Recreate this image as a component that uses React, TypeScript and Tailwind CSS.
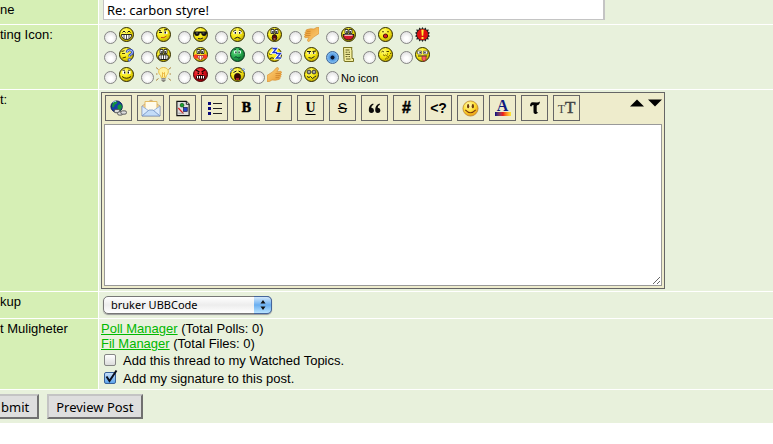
import { useState } from "react";
import type { ReactNode } from "react";

const lucida = "font-['Noto_Sans',sans-serif]";

function Face({ color = "yellow", children }: { color?: "yellow" | "green" | "red"; children: ReactNode }) {
  const edge = { yellow: "#2f2b00", green: "#06331a", red: "#3d0000" }[color];
  return (
    <svg viewBox="0 0 15 15" className="size-[15px]" aria-hidden="true">
      <circle cx="7.5" cy="7.5" r="7" fill={`url(#ball-${color})`} stroke={edge} strokeWidth="1" />
      {children}
    </svg>
  );
}

function Gradients() {
  return (
    <svg className="absolute size-0" aria-hidden="true">
      <defs>
        <radialGradient id="ball-yellow" cx="0.38" cy="0.3" r="0.8">
          <stop offset="0" stopColor="#fffb7a" />
          <stop offset="0.5" stopColor="#f6e810" />
          <stop offset="1" stopColor="#b09800" />
        </radialGradient>
        <radialGradient id="ball-green" cx="0.38" cy="0.3" r="0.75">
          <stop offset="0" stopColor="#6ddc8a" />
          <stop offset="0.5" stopColor="#2bb052" />
          <stop offset="1" stopColor="#0c6b30" />
        </radialGradient>
        <radialGradient id="ball-red" cx="0.38" cy="0.3" r="0.75">
          <stop offset="0" stopColor="#ff4a4a" />
          <stop offset="0.5" stopColor="#e0101c" />
          <stop offset="1" stopColor="#900008" />
        </radialGradient>
        <linearGradient id="hand" x1="0" y1="0" x2="1" y2="1">
          <stop offset="0" stopColor="#ffd27a" />
          <stop offset="1" stopColor="#e89a30" />
        </linearGradient>
      </defs>
    </svg>
  );
}

const wideEyes = (
  <>
    <path d="M4 2.500h3v4H4zM8 2.500h3v4H8z" fill="#fff" stroke="#111" strokeWidth="0.8" />
    <path d="M5.300 4h1.200v2H5.300zM8.600 4h1.200v2H8.600z" fill="#111" />
  </>
);

const handPath =
  "M0 8.500L3 6.500 5.500 5 9.500 0.800C10.800 0 12 1 11.300 2.500L10 4.800 13.300 4.300C14.800 4.300 14.900 6 13.700 6.500 14.700 6.900 14.500 8.300 13.400 8.600 14.200 9.100 13.900 10.400 12.800 10.600 13.300 11.300 12.900 12.300 12 12.400L8.500 13.300 5 13 2.500 14.500 0 14.500z";

type PostIcon = { name: string; art: ReactNode };

const iconRows: PostIcon[][] = [
  [
    { name: "Grin", art: <Face><path d="M3.500 5.500q1.500-3 3 0M8.500 5.500q1.500-3 3 0" stroke="#111" fill="none" /><path d="M2.500 7.500h10q0 5-5 5t-5-5z" fill="#fff" stroke="#111" strokeWidth="0.9" /><path d="M5 7.500v4.500M7.500 7.500v5M10 7.500v4.500" stroke="#222" strokeWidth="0.8" /></Face> },
    { name: "Wink", art: <Face><path d="M3 3.500l2 .5M3 5.500h3M8 3l3-.5" stroke="#111" fill="none" /><path d="M8 4.500h3.500V7H8z" fill="#fff" /><path d="M8.500 4.500H10V6.500H8.500z" fill="#111" /><path d="M5 10.500q3 1 5.500-1.500" stroke="#c04a20" fill="none" /></Face> },
    { name: "Cool", art: <Face><path d="M1 4.500h13v1.500q-.5 3-3 3T8.300 6.300H6.700Q6.500 9 4 9T1 6z" fill="#111" /><path d="M3 6h2M9.500 6h2" stroke="#888" strokeWidth="0.8" /><path d="M5 11.500q3 1 5-.5" stroke="#222" fill="none" /></Face> },
    { name: "Sad", art: <Face><path d="M3.500 4h3v3h-3zM8.500 4h3v3h-3z" fill="#fff" /><path d="M3 4.500L6 3M9 3l3 1.500" stroke="#111" strokeWidth="0.8" /><path d="M4.700 5H6v1.700H4.700zM9 5h1.300v1.700H9z" fill="#111" /><path d="M4.500 11.500q3-2.500 6 0" stroke="#111" fill="none" /></Face> },
    { name: "Shocked", art: <Face>{wideEyes}<ellipse cx="7.500" cy="10.500" rx="2.300" ry="2.900" fill="#5c0b0b" stroke="#111" strokeWidth="0.9" /><path d="M6.500 12h2" stroke="#e88" /></Face> },
    { name: "Thumbs down", art: <svg viewBox="0 0 15 15" className="size-[15px]" aria-hidden="true"><g transform="matrix(1 0 0 -1 0 15)"><path transform="matrix(-1 0 0 1 15 0)" d={handPath} fill="url(#hand)" stroke="#d58a2c" strokeWidth="0.6" /><path d="M1.500 6.500h5M2 8.600h4.500M3 10.600h3.500" stroke="#c97d25" strokeWidth="0.7" /></g></svg> },
    { name: "Laugh", art: <Face>{wideEyes}<path d="M2 7.500h11q-.5 5.500-5.500 5.500T2 7.500z" fill="#d4182a" stroke="#111" strokeWidth="0.9" /><path d="M3.500 8.200h8" stroke="#fff" /></Face> },
    { name: "Yawn", art: <Face><path d="M4 5q1-1 2 0M9 5q1-1 2 0" stroke="#5a4a00" fill="none" /><ellipse cx="7.500" cy="9" rx="2.200" ry="2" fill="#d32020" stroke="#3a0808" strokeWidth="0.9" /></Face> },
    { name: "Important", art: <svg viewBox="0 0 15 15" className="size-[15px]" aria-hidden="true"><path d="M7.500 0l1.300 2 2-1.500.5 2.300 2.500-.3-.8 2.300 2 1-1.500 1.700 1.500 1.700-2 1 .8 2.300-2.500-.3-.5 2.300-2-1.500-1.300 2-1.300-2-2 1.500-.5-2.300-2.500.3.800-2.300-2-1 1.500-1.700L0 5.800l2-1-.8-2.300 2.500.3.500-2.300 2 1.500z" fill="#222" /><circle cx="7.500" cy="7.500" r="5.500" fill="#e0100f" /><path d="M6.300 2.800h2.400L8.200 8.800H6.800zM6.500 10h2v2h-2z" fill="#ffef3a" /></svg> },
  ],
  [
    { name: "Question", art: <Face><path d="M2.500 4.500l3-.8M3 6.500h3M3.500 11l3.500-1" stroke="#4a4000" fill="none" /><path d="M8 5.500q0-2.500 2.700-2.500t2.800 2.300q0 1.700-2 2.300-1 .5-1 2" fill="none" stroke="#2b46ba" strokeWidth="2.600" /><path d="M8 5.500q0-2.500 2.700-2.500t2.800 2.300q0 1.700-2 2.300-1 .5-1 2" fill="none" stroke="#bfd0ff" strokeWidth="1" /><circle cx="10.500" cy="12.700" r="1.300" fill="#9bb4ff" stroke="#2b46ba" strokeWidth="0.8" /></Face> },
    { name: "Teeth", art: <Face>{wideEyes}<rect x="2.800" y="7.800" width="9.400" height="4.700" rx="1.500" fill="#fff" stroke="#111" /><path d="M5.200 7.800v4.700M7.500 7.800v4.700M9.800 7.800v4.700" stroke="#222" strokeWidth="0.8" /></Face> },
    { name: "Blush", art: <Face>{wideEyes}<circle cx="3" cy="9.500" r="2.300" fill="#ff3c24" /><circle cx="12" cy="9.500" r="2.300" fill="#ff3c24" /><path d="M4.500 8.500h6q-.5 4.500-3 4.500t-3-4.500z" fill="#fff" stroke="#a11" strokeWidth="0.8" /><path d="M6.500 8.500v4M8.500 8.500v4" stroke="#a44" strokeWidth="0.7" /></Face> },
    { name: "Sick", art: <Face color="green"><path d="M4 3.500h2.700v3H4zM8.300 3.500H11v3H8.300z" fill="#dfe" /><path d="M5.300 4.500h1.200v1.700H5.300zM8.500 4.500h1.200v1.700H8.500z" fill="#021" /><path d="M4 3l2-.8M9 2.200l2 .8M4.500 10.500q1.500-1.500 3 0t3-.5" stroke="#032" fill="none" strokeWidth="0.9" /></Face> },
    { name: "Sleepy", art: <Face><path d="M2 7h3M3 11.500q2-1.500 4 0" stroke="#222" fill="none" /><path d="M5.500 1.500h4L6 5.500h4M9 6.500h4.500l-4 4.500H14" stroke="#fff" strokeWidth="3" fill="none" /><path d="M5.500 1.500h4L6 5.500h4M9 6.500h4.500l-4 4.500H14" stroke="#1d3bd1" strokeWidth="1.300" fill="none" /></Face> },
    { name: "Smirk", art: <Face><path d="M3.500 5.500h3V7h-3zM8.500 5.500h3V7h-3z" fill="#fff" /><path d="M3 4.500h4M8.500 4.500L12 4" stroke="#111" /><path d="M4.700 5.200H6v1.600H4.700zM9 5.200h1.300v1.600H9z" fill="#111" /><path d="M4.500 10.500q3 2 6-1" stroke="#222" fill="none" /></Face> },
    { name: "Note", art: <svg viewBox="0 0 15 15" className="size-[15px]" aria-hidden="true"><path d="M2.500.5H11q-1 1.500 0 3v8h1.500v3H4q-1.300 0-1-2z" fill="#f4efa0" stroke="#77711d" strokeWidth="1" /><path d="M4.500 3h4M4.500 5.200h2M7.500 5.200H9M4.500 7.400H9M4.500 9.600h2M7.500 9.600H9M5 12h4.500" stroke="#4b4710" strokeWidth="0.9" /></svg> },
    { name: "Whistle", art: <Face><path d="M3.500 5q1-1.500 2.500 0M8.500 4.500H11" stroke="#4a3e00" fill="none" /><path d="M6 9q1.500-2 3 0t3-1M8 11q2 1 3-1" stroke="#8e7200" fill="none" /><path d="M5 8h1M9 7h1M12 6.500h1M7 12h1" stroke="#6e5800" /></Face> },
    { name: "Tongue", art: <Face><path d="M2.500 4h4v3h-4zM8.500 4h4v3h-4z" fill="#fff" stroke="#555" strokeWidth="0.7" /><path d="M4.500 4.800h1.300v1.400H4.500zM9.300 4.800h1.300v1.400H9.300z" fill="#111" /><path d="M3 9h9" stroke="#222" /><path d="M7 9.300h4V12q-.5 2-2 2t-2-2z" fill="#f55f68" stroke="#9e1e28" strokeWidth="0.7" /></Face> },
  ],
  [
    { name: "Smile", art: <Face><path d="M3.500 3.500h3v3.500h-3zM8.500 3.500h3v3.500h-3z" fill="#fff" /><path d="M3.500 3.300h2.500M9 3.300h2.500" stroke="#222" strokeWidth="0.8" /><path d="M5 4.500h1.300v2H5zM8.700 4.500H10v2H8.700z" fill="#111" /><path d="M3 9.500q4.500 3.500 9 0" stroke="#332b00" fill="none" /></Face> },
    { name: "Idea", art: <svg viewBox="0 0 15 15" className="size-[15px]" aria-hidden="true"><path d="M0 .5l2.500 2M15 .5l-2.500 2M0 7h1.500M15 7h-1.500M0 13.500l2.500-2M15 13.500l-2.500-2" stroke="#a8782c" strokeWidth="0.9" /><path d="M7.500.5c5.500 0 6 5.500 3 7.800L9.500 11h-4l-1-2.700C1.500 6 2 .5 7.500.5z" fill="#fff3a0" stroke="#e7b93d" strokeWidth="0.9" /><path d="M6.500 10V5.500l1 1 1-1V10" stroke="#e7a92c" fill="none" strokeWidth="0.8" /><path d="M5.500 11h4v2.500L8 15H7l-1.500-1.500z" fill="#85857d" /><path d="M5.500 12.300h4" stroke="#ddd" strokeWidth="0.6" /></svg> },
    { name: "Mad", art: <Face color="red"><path d="M3 3l3.500 2M12 3L8.500 5" stroke="#200" strokeWidth="1.300" /><path d="M4.500 5.500h1.500V7H4.500zM9 5.500h1.500V7H9z" fill="#200" /><rect x="3.500" y="8.500" width="8" height="3.500" rx="1" fill="#fff" stroke="#200" /><path d="M5.500 8.500V12M7.500 8.500V12M9.500 8.500V12" stroke="#200" strokeWidth="0.9" /></Face> },
    { name: "Cry", art: <Face><path d="M0 2.500q2-2 4 1M15 2.500q-2-2-4 1M0 5l2-1M15 5l-2-1" stroke="#6e94d8" fill="none" /><path d="M3.500 5.500l3-1.500M11.500 5.500l-3-1.500" stroke="#111" /><ellipse cx="7.500" cy="9.800" rx="3.200" ry="3.500" fill="#3a0505" stroke="#111" strokeWidth="0.6" /><path d="M6 12h3" stroke="#e23030" strokeWidth="1.400" /></Face> },
    { name: "Thumbs up", art: <svg viewBox="0 0 15 15" className="size-[15px]" aria-hidden="true"><path d={handPath} fill="url(#hand)" stroke="#d58a2c" strokeWidth="0.6" /><path d="M8.500 6.500h5M8.500 8.600H13M8.500 10.600H12" stroke="#c97d25" strokeWidth="0.7" /></svg> },
    { name: "Crazy", art: <Face><circle cx="5" cy="5" r="1.900" fill="#fff" stroke="#111" strokeWidth="0.9" /><circle cx="10" cy="5" r="1.900" fill="#fff" stroke="#111" strokeWidth="0.9" /><path d="M5 4.300v1.500M10 4.300v1.500" stroke="#111" /><path d="M3 9.500l2 1 1.500-1 2 2 2-1.500 1.500-1" stroke="#222" fill="none" /></Face> },
  ],
];

const radioClass =
  "size-[13px] shrink-0 appearance-none rounded-full border border-[#858585] bg-[radial-gradient(circle_at_50%_60%,#ffffff_20%,#d6d6d6_100%)] checked:border-[#38629a] checked:bg-[radial-gradient(circle,#0b1730_22%,#4b93df_30%,#b4e5ff_100%)]";

const checkboxClass =
  "peer size-3 appearance-none rounded-[2px] border border-[#858585] bg-linear-to-b from-white to-[#dcdcdc] checked:border-[#38629a] checked:from-[#c6e0fa] checked:to-[#5ba4ec]";

const tools: { name: string; art: ReactNode }[] = [
  { name: "Link", art: <svg viewBox="0 0 18 18" className="size-[17px]"><circle cx="7" cy="7" r="6" fill="#173ea8" stroke="#06134a" /><path d="M3 3q3-3 5-1l-1 2-2 1-1 3-2-1zM8 6l3-2 2 3-2 4-2 1-1-3z" fill="#17953b" /><path d="M3 2.500q2-1.500 3.500-1" stroke="#a9d9ff" fill="none" /><g fill="#ddd" stroke="#555"><rect x="4.500" y="10" width="6" height="3.500" rx="1.700" /><rect x="8" y="12.500" width="5.500" height="3.500" rx="1.700" /><rect x="11.500" y="11.500" width="6" height="3.500" rx="1.700" /></g></svg> },
  { name: "E-mail", art: <svg viewBox="0 0 20 18" className="h-[18px] w-5"><path d="M1 7l9-6 9 6v10H1z" fill="#f7d69a" stroke="#c4a887" /><path d="M4 2.500h12V11l-6 3-6-3z" fill="#fffbea" stroke="#e4bb62" /><path d="M1 7l7 5-7 5zM19 7l-7 5 7 5z" fill="#dcebfc" stroke="#88a6d2" strokeWidth="0.8" /><path d="M1 17l7-6h4l7 6z" fill="#c3dcf8" stroke="#7c9bcb" strokeWidth="0.9" /></svg> },
  { name: "Image", art: <svg viewBox="0 0 16 18" className="h-[17px] w-4"><path d="M1.500 1.500h10l3 3v12h-13z" fill="#ddd" stroke="#111" strokeWidth="1.200" /><path d="M11.500 1.500v3h3" fill="#fff" stroke="#111" /><circle cx="7" cy="5.500" r="2" fill="#16a02b" stroke="#064210" strokeWidth="0.6" /><rect x="8.500" y="8" width="4" height="4" fill="#2343cf" stroke="#0a123f" strokeWidth="0.7" /><path d="M3 8.500l5.500 6" stroke="#d22" strokeWidth="1.300" /><path d="M3 14h6" stroke="#999" /></svg> },
  { name: "List", art: <svg viewBox="0 0 16 15" className="h-[15px] w-4"><path d="M1 1h3v3H1zM1 6h3v3H1zM1 11h3v3H1z" fill="#080878" /><path d="M6 2.500h9M6 7.500h9M6 12.500h9" stroke="#222" strokeWidth="1" /></svg> },
  { name: "Bold", art: <span className="font-['Liberation_Serif',serif] text-[14px] font-bold [-webkit-text-stroke:0.5px_#000]">B</span> },
  { name: "Italic", art: <span className="font-['Liberation_Serif',serif] text-[14px] font-bold italic">I</span> },
  { name: "Underline", art: <span className="font-['Liberation_Serif',serif] text-[14px] font-bold underline underline-offset-2">U</span> },
  { name: "Strikethrough", art: <span className="font-['Liberation_Sans',sans-serif] text-[14px] line-through">S</span> },
  { name: "Quote", art: <svg viewBox="0 0 14 12" className="h-[11px] w-[13px]"><path d="M5.500.5Q.5 2 .8 8a2.800 2.800 0 1 0 2.700-2.800Q3.300 3 6 1.500zM12.500.5Q7.500 2 7.800 8a2.800 2.800 0 1 0 2.700-2.800Q10.300 3 13 1.500z" fill="#0a0a0a" /></svg> },
  { name: "Code", art: <span className="font-['Liberation_Sans',sans-serif] text-[16px] font-bold [-webkit-text-stroke:0.5px_#000]">#</span> },
  { name: "PHP", art: <span className="font-['Liberation_Sans',sans-serif] text-[14px] font-bold">&lt;?</span> },
  { name: "Smileys", art: <svg viewBox="0 0 18 18" className="size-[17px]"><defs><radialGradient id="smile" cx="0.4" cy="0.3" r="0.7"><stop offset="0" stopColor="#fffbc0" /><stop offset="0.550" stopColor="#ffe032" /><stop offset="1" stopColor="#eb9d13" /></radialGradient></defs><circle cx="9" cy="9" r="8" fill="url(#smile)" stroke="#b98232" strokeWidth="0.8" /><ellipse cx="6.500" cy="6.500" rx="1.200" ry="2.300" fill="#6e3d10" /><ellipse cx="11.500" cy="6.500" rx="1.200" ry="2.300" fill="#6e3d10" /><path d="M3.500 10.500q5.500 6 11 0" stroke="#7c3b10" strokeWidth="1.300" fill="none" /></svg> },
  { name: "Colour", art: <span className="flex flex-col items-center"><span className="font-['Liberation_Serif',serif] text-[16px] leading-3 font-bold text-[#101b80]">A</span><span className="h-1 w-4 bg-linear-to-r from-[#100080] via-[#ee1111] to-[#ffee33]" /></span> },
  { name: "Font", art: <svg viewBox="0 0 12 16" className="h-4 w-3"><path d="M1 6Q1.200 1.800 4 2.200l4 .3q1.500 0 3-1-.3 3.500-3 3.700l-.3 1v5.300q.3 1 1.500 1-1.500 2-3.500 1.300Q4.300 13.500 4.500 11V5Q2.500 4.800 2.500 6.500z" fill="#050505" /></svg> },
  { name: "Size", art: <span className="flex items-baseline font-['Liberation_Serif',serif] text-[#444]"><span className="text-[12px]">T</span><span className="text-[17px] [-webkit-text-stroke:0.5px_#444]">T</span></span> },
];

function Row({ label, htmlFor, height, children }: { label: string; htmlFor?: string; height: string; children: ReactNode }) {
  return (
    <div className={`flex gap-px border-b border-white ${height}`}>
      <div className="w-[98px] shrink-0 bg-[#d6efb5] pt-0.5 leading-[15px] whitespace-nowrap">
        {htmlFor ? <label htmlFor={htmlFor}>{label}</label> : <span>{label}</span>}
      </div>
      <div className="min-w-0 flex-1 bg-[#e8f1dc] px-0.5">{children}</div>
    </div>
  );
}

export default function App() {
  const [icon, setIcon] = useState("Note");
  const [rows, setRows] = useState(0);

  return (
    <form className="bg-white font-['Liberation_Sans',sans-serif] text-[13px] text-black" onSubmit={(e) => e.preventDefault()}>
      <Gradients />
      <Row label="ne" htmlFor="subject" height="h-[25px]">
        <input
          id="subject"
          defaultValue="Re: carbon styre!"
          className={`ml-0.5 block h-5 w-full max-w-[502px] border-r-2 border-b border-l border-[#c4c4c4] bg-white px-[3px] text-[13px] outline-none ${lucida}`}
        />
      </Row>

      <Row label="ting Icon:" height="min-h-[65px]">
        <fieldset className="flex flex-col pt-[2px] pl-[3px]" aria-label="Posting Icon">
          {iconRows.map((row, i) => (
            <div key={i} className="flex h-5">
              {row.map(({ name, art }) => (
                <label key={name} className="flex w-[37px] items-start gap-0.5">
                  <input type="radio" name="icon" aria-label={name} checked={icon === name} onChange={() => setIcon(name)} className={`mt-1 ${radioClass}`} />
                  {art}
                </label>
              ))}
              {i === 2 && (
                <label className="flex items-start gap-0.5 text-[11px]">
                  <input type="radio" name="icon" checked={icon === "none"} onChange={() => setIcon("none")} className={`mt-1 ${radioClass}`} />
                  <span className="pt-1 leading-[15px]">No icon</span>
                </label>
              )}
            </div>
          ))}
        </fieldset>
      </Row>

      <Row label="t:" htmlFor="post" height="min-h-[202px]">
        <div className="mt-0.5 flex w-full max-w-[564px] flex-col gap-[3px] border border-[#666] bg-[#eeeccc] p-0.5">
          <div className="flex items-start justify-between">
            <div className="flex gap-[5px] pl-px">
              {tools.map(({ name, art }) => (
                <button key={name} type="button" aria-label={name} className="flex h-[26px] w-[27px] items-center justify-center border border-[#666] leading-4">
                  {art}
                </button>
              ))}
            </div>
            <div className="flex gap-1 pt-1">
              <button type="button" aria-label="Smaller" onClick={() => setRows(Math.max(0, rows - 1))}>
                <svg viewBox="0 0 14 8" className="h-2 w-3.5"><path d="M0 7.500L7 .5l7 7z" /></svg>
              </button>
              <button type="button" aria-label="Larger" onClick={() => setRows(rows + 1)}>
                <svg viewBox="0 0 14 8" className="h-2 w-3.5"><path d="M0 .5L7 7.500l7-7z" /></svg>
              </button>
            </div>
          </div>
          <textarea id="post" style={{ height: 162 + rows * 60 }} className="block w-full border border-[#999] bg-white p-1 outline-none" />
        </div>
      </Row>

      <Row label="kup" htmlFor="markup" height="h-[27px]">
        <div className={`relative mt-1 ml-0.5 w-[169px] ${lucida}`}>
          <select id="markup" className="block h-[18px] w-full appearance-none rounded-[5px] border border-[#777] bg-linear-to-b from-white via-[#ededed] to-white pl-[7px] text-[11px] leading-4 shadow-[0_1px_1px_#999] outline-none">
            <option>bruker UBBCode</option>
            <option>bruker HTML</option>
          </select>
          <span className="pointer-events-none absolute inset-y-0 right-0 flex w-[18px] items-center justify-center rounded-r-[5px] border border-l-0 border-[#45669b] bg-linear-to-b from-[#d2e8fb] via-[#69aef0] to-[#b9e4ff]">
            <svg viewBox="0 0 6 10" className="h-2.5 w-1.5"><path d="M.5 3.500L3 0l2.500 3.500zM.5 6.500L3 10l2.500-3.500z" fill="#111" /></svg>
          </span>
        </div>
      </Row>

      <Row label="t Muligheter" height="min-h-[71px]">
        <div className="pt-0.5 leading-[15px]">
          <p><a href="#polls" className="text-[#00b800] underline">Poll Manager</a> (Total Polls: 0)</p>
          <p><a href="#files" className="text-[#00b800] underline">Fil Manager</a> (Total Files: 0)</p>
          <label className="flex h-[18px] items-center gap-[7px] pl-[3px]">
            <input type="checkbox" className={checkboxClass} />
            Add this thread to my Watched Topics.
          </label>
          <label className="relative flex h-[18px] items-center gap-[7px] pl-[3px]">
            <input type="checkbox" defaultChecked className={checkboxClass} />
            <svg viewBox="0 0 14 14" className="pointer-events-none absolute top-0 left-[3px] hidden size-3.5 peer-checked:block">
              <path d="M2.500 7.500L5.500 12 12.500 1.500" fill="none" stroke="#0a0f1c" strokeWidth="2" />
            </svg>
            Add my signature to this post.
          </label>
        </div>
      </Row>

      <div className={`flex h-[33px] items-start gap-2 bg-[#e8f1dc] pt-1 ${lucida}`}>
        <button type="submit" aria-label="Submit" className="h-[25px] border-2 border-l-0 border-t-[#c4c4c4] border-r-[#707070] border-b-[#707070] bg-[#dedede] pr-2 pl-px text-[13px] leading-5">
          bmit
        </button>
        <button type="button" className="h-[25px] border-2 border-t-[#c4c4c4] border-r-[#707070] border-b-[#707070] border-l-[#c4c4c4] bg-[#dedede] px-[7px] text-[13px] leading-5">
          Preview Post
        </button>
      </div>
    </form>
  );
}
